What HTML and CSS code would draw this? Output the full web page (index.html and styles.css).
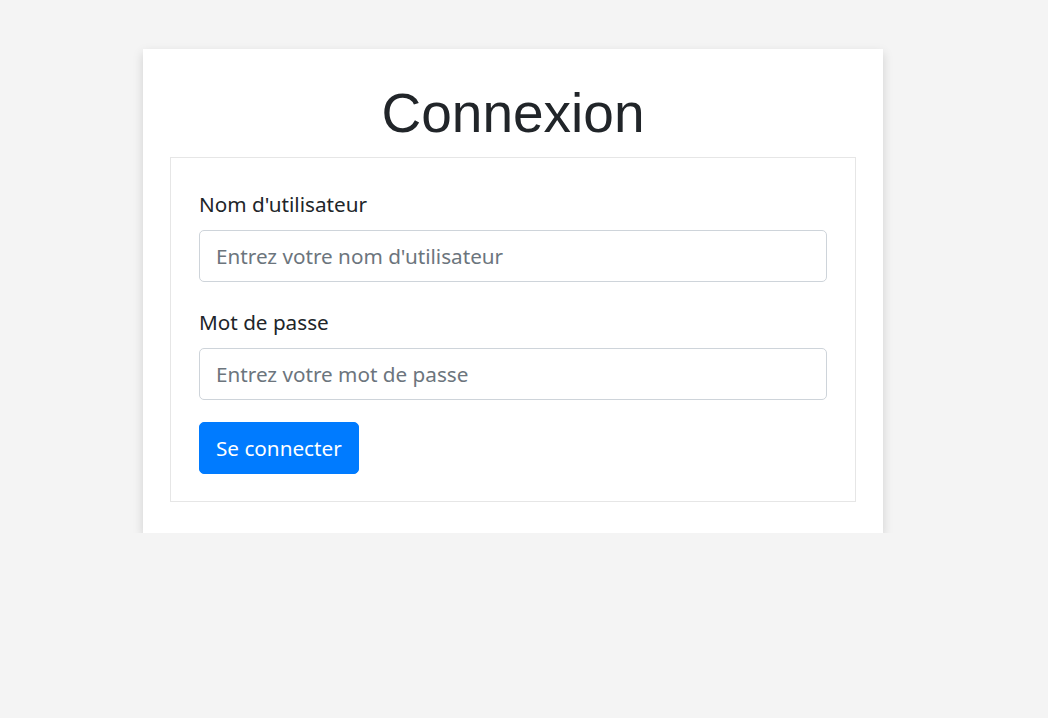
FILE: index.html
```html
<!DOCTYPE html>
<html lang="fr">
<head>
<meta charset="utf-8">
<title>Connexion</title>
<link rel="stylesheet" href="styles.css">
</head>
<body>
<main class="card">
  <h1 class="title">Connexion</h1>
  <form class="login-form">
    <div class="form-group">
      <label class="label" for="username">Nom d'utilisateur</label>
      <input class="input" id="username" type="text" placeholder="Entrez votre nom d'utilisateur">
    </div>
    <div class="form-group">
      <label class="label" for="password">Mot de passe</label>
      <input class="input" id="password" type="password" placeholder="Entrez votre mot de passe">
    </div>
    <button class="btn" type="button">Se connecter</button>
  </form>
</main>
</body>
</html>
```

FILE: styles.css
```css
html, body {
  margin: 0;
  padding: 0;
}
body {
  background: #f4f4f4;
  font-family: "Noto Sans", "Open Sans", sans-serif;
  color: #212529;
}
.card {
  box-sizing: border-box;
  width: 740px;
  margin: 49px 0 0 143px;
  padding: 31px 27px 31px;
  background: #fff;
  box-shadow: 0 4px 10px rgba(0, 0, 0, 0.15);
}
.title {
  margin: 0 0 11px;
  font-family: "Liberation Sans", Arial, sans-serif;
  font-weight: 400;
  font-size: 55px;
  line-height: 66px;
  text-align: center;
  color: #212529;
}
.login-form {
  border: 1px solid #e6e6e6;
  padding: 28px 28px 27px;
}
.form-group {
  display: flex;
  flex-direction: column;
  margin-bottom: 22px;
}
.label {
  font-size: 20.7px;
  line-height: 30px;
  padding-top: 3px;
  margin-bottom: 11px;
  color: #212529;
}
.input {
  box-sizing: border-box;
  height: 52px;
  padding: 10px 16px;
  border: 1px solid #ced4da;
  border-radius: 5px;
  font-family: inherit;
  font-size: 20.7px;
  line-height: 30px;
  color: #495057;
  background: #fff;
}
.input::placeholder {
  color: #6c757d;
}
.btn {
  align-self: flex-start;
  box-sizing: border-box;
  height: 52px;
  padding: 10px 16px;
  border: 1px solid #007bff;
  border-radius: 5px;
  background: #007bff;
  color: #fff;
  font-family: inherit;
  font-size: 20.7px;
  line-height: 30px;
  cursor: pointer;
}
```
